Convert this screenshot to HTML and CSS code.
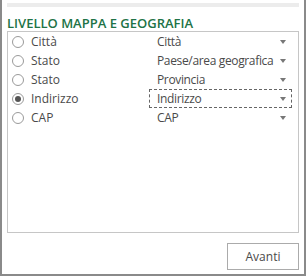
FILE: index.html
```html
<!DOCTYPE html>
<html lang="it">
<head>
    <meta charset="UTF-8">
    <title>Livello mappa e geografia</title>
    <link rel="stylesheet" href="styles.css">
</head>
<body>
    <div class="pane">
        <div class="topbar"></div>
        <h2 class="title">LIVELLO MAPPA E GEOGRAFIA</h2>
        <div class="fields">
            <div class="field">
                <span class="radio"></span>
                <span class="name">Città</span>
                <span class="select">Città<i class="arrow"></i></span>
            </div>
            <div class="field">
                <span class="radio"></span>
                <span class="name">Stato</span>
                <span class="select">Paese/area geografica<i class="arrow"></i></span>
            </div>
            <div class="field">
                <span class="radio"></span>
                <span class="name">Stato</span>
                <span class="select">Provincia<i class="arrow"></i></span>
            </div>
            <div class="field">
                <span class="radio checked"></span>
                <span class="name">Indirizzo</span>
                <span class="select focus">Indirizzo<i class="arrow"></i></span>
            </div>
            <div class="field">
                <span class="radio"></span>
                <span class="name">CAP</span>
                <span class="select">CAP<i class="arrow"></i></span>
            </div>
        </div>
        <div class="footer">
            <button class="btn">Avanti</button>
        </div>
    </div>
</body>
</html>
```
FILE: styles.css
```css
html, body {
    margin: 0;
    padding: 0;
    background: #fff;
}
body {
    font-family: 'Open Sans', 'Noto Sans', sans-serif;
    color: #4a4a4a;
}
.pane {
    box-sizing: border-box;
    width: 306px;
    height: 276px;
    border: 2px solid #8a8a8a;
    border-top: none;
    padding: 3px 5px 0 5px;
    display: flex;
    flex-direction: column;
}
.topbar {
    height: 4px;
    background: #ececec;
}
.title {
    margin: 8px 0 0 0;
    height: 16px;
    font-size: 13px;
    line-height: 16px;
    font-weight: 600;
    color: #217346;
    white-space: nowrap;
}
.fields {
    box-sizing: border-box;
    height: 202px;
    border: 1px solid #c6c6c6;
    padding: 0 0 0 4px;
}
.field {
    display: flex;
    align-items: center;
    height: 19px;
    font-size: 12px;
    white-space: nowrap;
}
.radio {
    box-sizing: border-box;
    width: 12px;
    height: 12px;
    border: 1px solid #9a9a9a;
    border-radius: 50%;
    display: flex;
    align-items: center;
    justify-content: center;
}
.radio.checked::after {
    content: '';
    width: 6px;
    height: 6px;
    border-radius: 50%;
    background: #555;
}
.name {
    margin-left: 7px;
    width: 118px;
}
.select {
    box-sizing: border-box;
    height: 19px;
    width: 143px;
    display: flex;
    align-items: center;
    justify-content: space-between;
    padding: 0 5px 0 7px;
    border: 1px solid transparent;
    letter-spacing: -0.35px;
}
.select.focus {
    border: 1px dashed #666;
}
.arrow {
    flex-shrink: 0;
    width: 0;
    height: 0;
    border-left: 3px solid transparent;
    border-right: 3px solid transparent;
    border-top: 4px solid #777;
}
.footer {
    display: flex;
    justify-content: flex-end;
    padding: 10px 0 0 0;
}
.btn {
    box-sizing: border-box;
    width: 72px;
    height: 27px;
    background: #fff;
    border: 1px solid #ababab;
    font-family: 'Open Sans', 'Noto Sans', sans-serif;
    font-size: 12px;
    color: #4a4a4a;
    padding: 0;
}
```
